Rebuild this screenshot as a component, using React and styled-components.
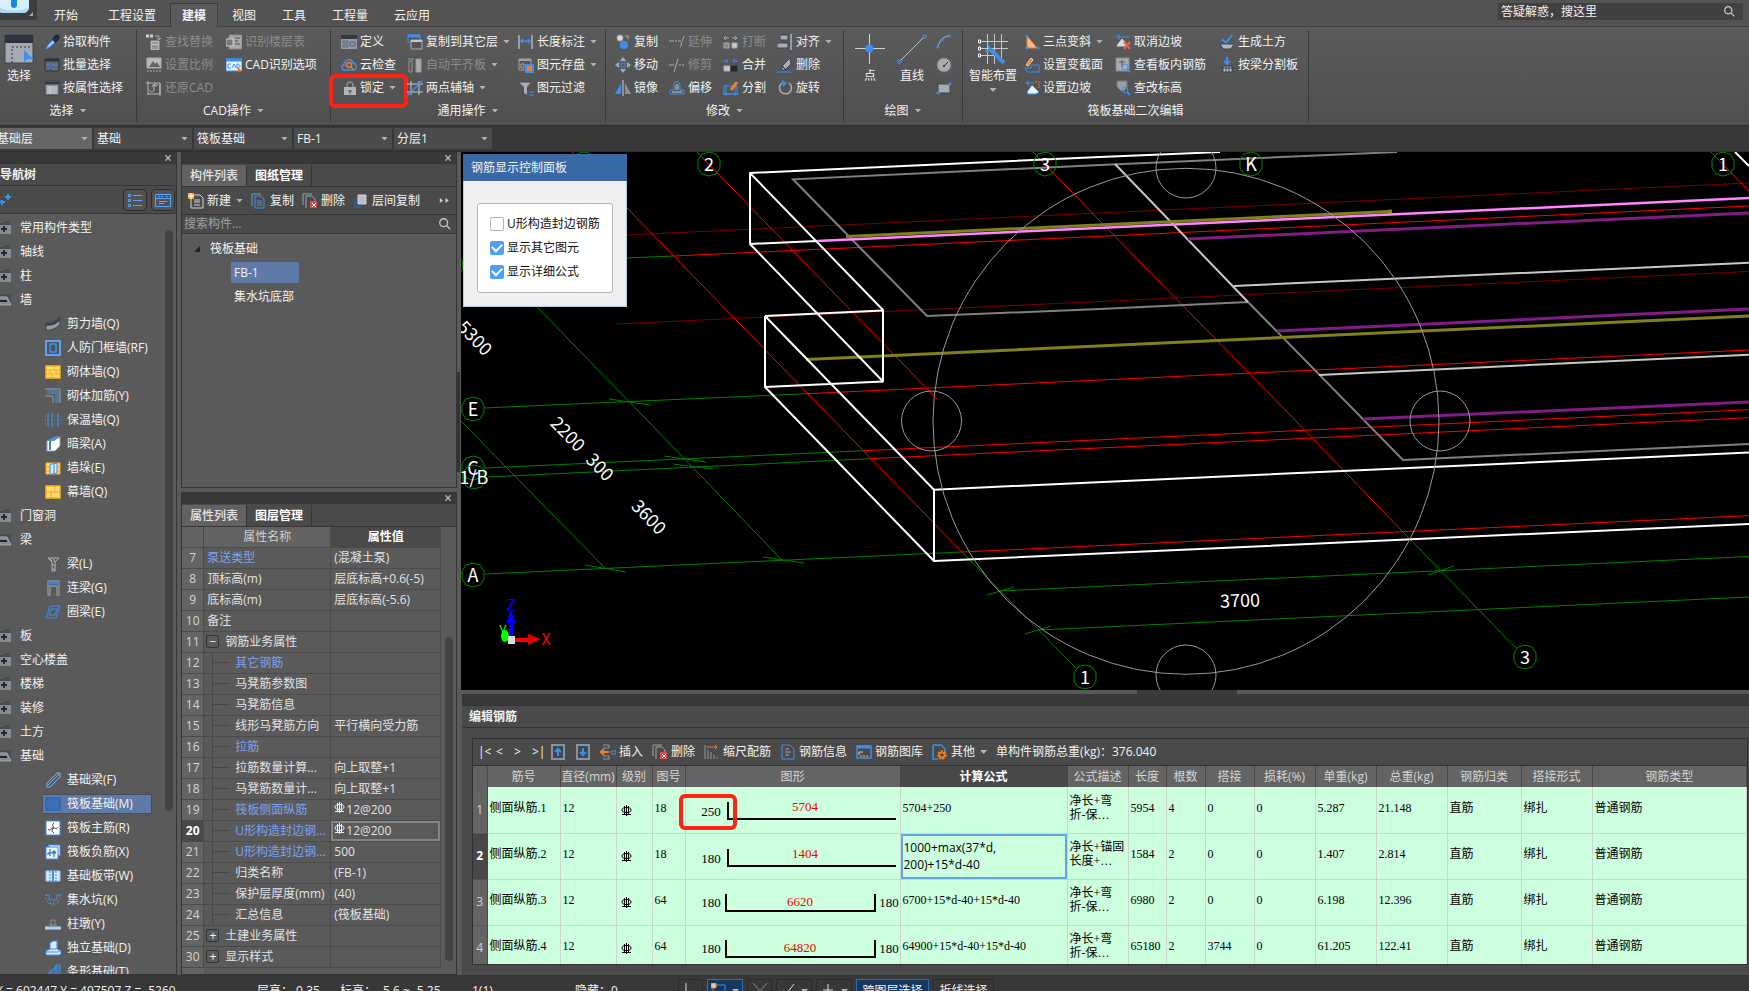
import styled, { createGlobalStyle, css } from 'styled-components';

const GlobalStyle = createGlobalStyle`
  :root {
    --bar: #383838;
    --line: #353535;
    --title: #4a4a4a;
    --panel: #5a5a5a;
    --head: #626262;
    --select: #607aa8;
    --blue: #3d8fee;
    --mark: #ff2314;
    --cell: #ccffdd;
  }

  * {
    box-sizing: border-box;
  }

  body {
    margin: 0;
    overflow: hidden;
    background: var(--bar);
  }

  body,
  button,
  input,
  select {
    font-family: 'Open Sans', 'Noto Sans CJK SC', sans-serif;
    font-size: 12px;
    line-height: 16px;
    color: #f2f2f2;
  }

  button {
    padding: 0;
    border: 0;
    background: none;
    white-space: nowrap;
  }

  svg {
    display: block;
    flex: none;
  }
`;

/* ---------- icons ---------- */

const G = '#a7abb3';
const D = '#3c424c';
const B = '#3d8fee';
const O = '#f07d28';

const Svg = ({ size = 16, box = 16, children }) => (
  <svg width={size} height={size} viewBox={`0 0 ${box} ${box}`} fill='none' stroke={G} aria-hidden='true'>
    {children}
  </svg>
);

const icons = {
  pick: (
    <>
      <path d='M2 15l2-4 5-5 2 2-5 5z' stroke={B} fill='#9ec8f5' />
      <path d='M8 5l4 4M9 4l3-3 3 1v3l-3 3z' stroke='#25282e' fill='#25282e' />
    </>
  ),
  batch: (
    <>
      <path d='M1 2h14v12H1z' fill='#5f6670' stroke='#2d3540' />
      <path d='M1 3h14' stroke='#2d3540' strokeWidth='3' />
      <path d='M3 7l1 1 2-2M3 11l1 1 2-2M8 8h5M8 12h5' stroke={B} />
    </>
  ),
  byProp: (
    <>
      <path d='M1 1h14v14H1z' fill='#8f949c' stroke={D} />
      <path d='M1 3h14' stroke='#333842' strokeWidth='3' />
      <path d='M3 7h10M3 9h10M3 11h10M3 13h10M6 6v8' stroke='#d5d8dd' />
    </>
  ),
  replace: (
    <>
      <path d='M0 2h3M4 2h3' stroke='#d0d0d0' strokeWidth='3' />
      <path d='M9 2h4v4M11 4l2 2 2-2' />
      <path d='M5 7h8v9H5z' fill='#c4c4c4' />
      <path d='M6 9h6M6 12h6M6 14h6' stroke='#666' />
    </>
  ),
  ratio: (
    <>
      <path d='M1 1h14v10H1z' fill='#b8b8b8' />
      <path d='M3 10l4-6 2 3 2-2 3 5z' fill='#666' stroke='none' />
      <path d='M1 14h14' strokeDasharray='2 1' />
    </>
  ),
  restore: <path d='M2 1v14M0 3h14v11H2M14 3v13M4 10c0 3 4 2 4 0V5h4M6 7l2-3 2 3' stroke='#b8b8b8' />,
  floors: (
    <>
      <path d='M3 1h13v14H3z' fill='#aaa' stroke='#888' />
      <path d='M0 5h7v7H0z' fill='#777' stroke='#ccc' />
      <path d='M9 4h5M9 7h3M9 10h5' stroke='#555' />
    </>
  ),
  cad: (
    <>
      <path d='M0 2h16v12H0z' fill='#e8f2ff' stroke={B} />
      <path d='M0 3h16' stroke={B} strokeWidth='3' />
      <path d='M5 7H2v4h3M6 11l2-4 2 4M11 7v4c4 0 4-4 0-4' stroke={B} />
      <path d='M11 9l5 5h-3l-1 2z' fill={O} stroke='none' />
    </>
  ),
  define: (
    <>
      <path d='M0 1h16v14H0z' fill='#9398a1' stroke='none' />
      <path d='M0 3h16' stroke='#333842' strokeWidth='4' />
      <path d='M2 7h5v2H2zM2 11h5v2H2zM9 8h5v4H9z' stroke='#596880' />
    </>
  ),
  cloud: (
    <>
      <path d='M4 13C0 13 0 8 3 8c0-6 8-7 9-2 4 0 4 7 1 7z' stroke={B} strokeWidth='1.5' />
      <circle cx='8' cy='8' r='2.5' stroke={O} strokeWidth='1.5' />
      <path d='M10 10l3 3' stroke={O} strokeWidth='1.5' />
    </>
  ),
  lock: (
    <>
      <path d='M6 8V5c0-4 6-4 6 0v3' stroke='#8d8f94' strokeWidth='1.5' />
      <path d='M3 7h12v8H3z' fill='#b3b4ba' stroke='none' />
      <path d='M9 10v4M7 11h4' stroke='#555' />
    </>
  ),
  copyFloor: (
    <>
      <path d='M1 1h12v7H1z' fill='#555' stroke={B} />
      <path d='M1 2h12' stroke={B} strokeWidth='3' />
      <path d='M4 6h11v9H4z' fill='#555' />
      <path d='M4 7h11' stroke='#c5c8cc' strokeWidth='2' />
    </>
  ),
  level: (
    <>
      <path d='M1 2h6M2 4h3v11H2z' stroke='#999' />
      <path d='M9 2h5v13H9z' fill='#aaa' stroke='#999' />
    </>
  ),
  twoPoint: (
    <>
      <path d='M4 1v14M12 1v14M0 4h16M0 12h16' stroke='#c5c8cc' />
      <path d='M1 15L15 1' stroke={B} strokeWidth='1.5' />
    </>
  ),
  length: (
    <>
      <path d='M1 1v14M14 1v14' stroke='#dde' />
      <path d='M3 7h9M5 5L3 7l2 2M10 5l2 2-2 2' stroke={B} strokeWidth='1.5' />
    </>
  ),
  saveUnit: (
    <>
      <path d='M1 2h12v11H1z' stroke='#9ba3ae' fill='#555' />
      <path d='M1 3h12' stroke='#9ba3ae' strokeWidth='2' />
      <path d='M3 7h3v4H3z' />
      <path d='M8 8h7v7H8z' fill={O} stroke={B} strokeWidth='2' />
    </>
  ),
  filter: (
    <>
      <path d='M1 2h12L9 7v8l-3-2V7z' fill={G} stroke='none' />
      <path d='M1 2h12' stroke={D} />
      <path d='M11 12h5M11 15h5' stroke={B} />
    </>
  ),
  copyObj: (
    <>
      <circle cx='5' cy='4' r='3' fill='#d6d8dc' />
      <circle cx='9' cy='11' r='4' fill={B} stroke='none' />
      <path d='M10 2h3v3' />
    </>
  ),
  move: (
    <>
      <path d='M8 0l3 4H5zM8 16l3-4H5zM0 8l4-3v6zM16 8l-4-3v6z' fill={G} stroke='none' />
      <path d='M6 6h4v4H6z' stroke={B} />
    </>
  ),
  mirror: (
    <>
      <path d='M6 3v11H0z' fill={B} stroke='none' />
      <path d='M10 3v11h6z' fill='#8d929a' stroke='none' />
      <path d='M8 0v16' stroke='#ccc' />
    </>
  ),
  extend: <path d='M0 7h8M9 7h3M15 2l-4 12' strokeDasharray='5 1' />,
  trim: <path d='M0 8h5M10 8h2M13 8h2M9 2L5 15' />,
  offset: (
    <>
      <path d='M1 14h14v-4h-4V6c0-6-7-6-6 0v4H1z' stroke={B} />
      <path d='M3 12h10M7 10V6c0-2 2-2 2 0v4' stroke='#c5c8cc' />
    </>
  ),
  breakObj: (
    <>
      <path d='M1 9h5v5H1z' fill='#888' />
      <path d='M9 9h5v5H9z' fill='#c9c9c9' />
      <path d='M1 4h5M3 2L1 4l2 2M9 4h5M12 2l2 2-2 2' />
    </>
  ),
  merge: (
    <>
      <path d='M1 9h6v5H1z' fill='#c3c6cb' />
      <path d='M8 9h6v5H8z' fill='#222831' stroke='#222831' />
      <path d='M0 4h5M3 2l2 2-2 2M15 4h-5M12 2l-2 2 2 2' stroke={B} />
    </>
  ),
  split: (
    <>
      <path d='M1 6h13v8H1zM0 14h16M3 4v12M12 4v12' stroke={B} />
      <path d='M8 10l6-8' stroke={O} strokeWidth='3' />
    </>
  ),
  align: (
    <>
      <path d='M3 1h8v5H3zM0 9h11v5H0z' fill={G} stroke={D} />
      <path d='M14 0v16' stroke='#ddd' />
    </>
  ),
  erase: (
    <>
      <path d='M4 13l2-5 7-7 1 6-6 6z' fill={G} stroke={D} />
      <path d='M5 9l4 4' stroke='#222' />
      <path d='M0 15h14' stroke={B} />
    </>
  ),
  rotate: (
    <>
      <path d='M5 3a6 6 0 1 0 7 0' stroke='#a8acb4' strokeWidth='1.5' />
      <path d='M5 0l5 3-4 4z' fill={B} stroke='none' />
    </>
  ),
  arc: (
    <>
      <path d='M2 13C3 7 6 3 13 2' stroke='#b8bbc2' />
      <path d='M1 12h2v2H1zM5 5h2v2H5zM12 1h2v2h-2z' stroke={B} />
    </>
  ),
  circle: (
    <>
      <circle cx='8' cy='8' r='7' fill={G} stroke='#777b84' />
      <path d='M8 9l4-4' stroke='#222' />
      <path d='M7 8h2v2H7z' fill='#444' stroke='none' />
    </>
  ),
  rect: (
    <>
      <path d='M2 4h12v9H2z' fill={G} stroke={D} />
      <path d='M1 12h2v2H1zM13 3h2v2h-2z' stroke={B} />
    </>
  ),
  threePoint: (
    <>
      <path d='M3 2v12h10z' fill='#f6b98d' stroke={O} />
      <path d='M2 1h2v2H2zM2 13h2v2H2zM13 13h2v2h-2z' stroke={B} />
    </>
  ),
  section: (
    <>
      <path d='M1 11h6V8h8v7H3z' stroke={B} />
      <path d='M2 8l5-7 2 2-5 6z' fill={O} stroke='#ffd2ad' />
    </>
  ),
  slope: (
    <>
      <path d='M1 3h9M4 0v6' stroke={B} />
      <path d='M3 12l5-7 7 7-3 2H4z' fill='#e8f2ff' stroke={B} />
      <path d='M11 2h4v6' stroke={O} strokeDasharray='2 1' />
    </>
  ),
  cancelSlope: (
    <>
      <path d='M1 3h13M4 0v6' stroke={B} />
      <path d='M2 12l5-7 6 7z' fill='#d8dbe0' stroke='#d8dbe0' />
      <path d='M9 8l6 7M15 8l-6 7' stroke='#e8604c' strokeWidth='2' />
    </>
  ),
  viewBar: (
    <>
      <path d='M1 1h13v13H1z' fill={G} stroke='#858a92' />
      <path d='M7 3v7M4 5h6' stroke='#555' />
      <circle cx='10' cy='10' r='3' stroke={B} />
      <path d='M12 12l3 3' stroke={B} strokeWidth='2' />
    </>
  ),
  checkLevel: (
    <>
      <path d='M2 1h10v6l-3 4H6L2 7z' fill='#999da6' stroke='#777' />
      <circle cx='10' cy='10' r='3' stroke={B} />
      <path d='M12 12l3 3' stroke={B} strokeWidth='2' />
    </>
  ),
  earth: (
    <>
      <path d='M3 5l4 4 6-8' stroke={B} strokeWidth='2' />
      <path d='M1 10h14l-3 5H4z' fill='#b4b7bd' stroke={D} />
    </>
  ),
  beamSplit: (
    <>
      <path d='M4 9h9v6H4z' fill='#bfc2c8' stroke={D} />
      <path d='M1 11h14M7 9v7M10 9v7' stroke={D} />
      <path d='M8 0v7M5 4l3 3 3-3' stroke={B} strokeWidth='2' />
    </>
  ),
  newDoc: (
    <>
      <path d='M3 2h9l3 3v10H3z' stroke='#cfd2d6' />
      <path d='M6 7h6M6 9h6M6 12h6' stroke='#cfd2d6' />
      <path d='M0 0h6v6H0z' fill='#f8a73a' stroke='none' />
      <path d='M3 0v6M0 3h6' stroke='#fff' />
    </>
  ),
  copyDoc: (
    <>
      <path d='M1 13V1h9' stroke='#7f9ab5' />
      <path d='M4 3h6l3 3v9H4z' stroke={B} />
      <path d='M6 8h5M6 10h5M6 12h5' stroke={B} />
    </>
  ),
  delDoc: (
    <>
      <path d='M1 12V1h9M4 15V3h6l3 3v2' stroke='#9ba5af' />
      <path d='M8 8h7v7H8z' fill='#e04a4a' stroke='none' />
      <path d='M10 10l4 4M14 10l-4 4' stroke='#fff' />
    </>
  ),
  layerCopy: (
    <>
      <path d='M2 5v9h8' stroke='#285c94' strokeWidth='2' />
      <path d='M5 2h8v9H5z' fill='#b8bdc8' stroke='#d0d4dd' />
    </>
  ),
  folder: (
    <>
      <path d='M1 3h8l2-2h4v13H1z' fill='#474c54' stroke='none' />
      <path d='M1 5h15v9H1z' fill='#868b94' stroke='none' />
      <path d='M6 9h6M9 6v6' stroke='#25282d' strokeWidth='2' />
    </>
  ),
  folderOpen: (
    <>
      <path d='M1 2h15v12H1z' fill='#474c54' stroke='none' />
      <path d='M1 5h11l4 8H1z' fill='#868b94' stroke='#aaa' />
      <path d='M5 9h7' stroke='#25282d' strokeWidth='2' />
    </>
  ),
  wall: (
    <>
      <path d='M1 6c6 1 9-1 14-5v7C12 12 6 15 1 14z' fill='#989da6' stroke={D} />
      <path d='M1 8c6 1 9-1 14-5' stroke={D} strokeWidth='3' />
    </>
  ),
  frame: (
    <>
      <path d='M1 1h14v14H1z' fill='#4e545e' stroke='#64a1e6' strokeWidth='2' />
      <path d='M5 4h6v8H5z' stroke={B} strokeWidth='1.5' />
    </>
  ),
  brick: (
    <>
      <path d='M1 2h14v12H1z' fill='#ffda7e' stroke='#ffb20f' strokeWidth='1.5' />
      <path d='M1 6h14M1 10h14M9 2v4M5 6v4M11 6v4M7 10v4' stroke='#ffab00' />
    </>
  ),
  curtain: (
    <>
      <path d='M1 2h14v12H1z' fill='#ffda7e' stroke='#ffb20f' strokeWidth='1.5' />
      <path d='M1 8h14M10 2v6M6 8v6' stroke='#ffab00' />
    </>
  ),
  brickBar: (
    <>
      <path d='M0 1h15v14M0 8h8v7' stroke='#8fa3ae' />
      <path d='M2 3h11v12M2 5h9v10' stroke='#4a93e0' />
    </>
  ),
  insulate: (
    <>
      <path d='M3 1v14M7 1v14M13 1v14' stroke='#4a93e0' />
      <path d='M0 4h16M0 8h16M0 12h16' stroke='#4a93e0' strokeDasharray='1 2' />
    </>
  ),
  hiddenBeam: (
    <>
      <path d='M2 5l9-4h4v9l-5 5H2z' fill='#fff' stroke='#89a0b5' />
      <path d='M2 5l9-4h4L9 5z' fill={B} stroke='none' />
      <path d='M5 5v9' stroke='#3e83ca' strokeWidth='2' />
    </>
  ),
  pier: (
    <>
      <path d='M1 3h14v11H1z' fill='#ffda7e' stroke='#ffb20f' />
      <path d='M1 7h14M1 11h14' stroke='#ffab00' />
      <path d='M5 5l4-2v10l-4 2zM9 4l3-1v10l-3 1' fill='#d6e9ff' stroke={B} />
    </>
  ),
  beam: <path d='M3 2h11l-4 4v9H7V6zM5 3l2 2M8 3l2 3M7 8l3 2M7 12l3 2' stroke='#b4b6b9' />,
  linkBeam: (
    <>
      <path d='M3 15V1h11v14h-2V6H5v9z' stroke='#899096' strokeWidth='1.5' />
      <path d='M3 3h11' stroke='#3e83ca' strokeWidth='3' />
    </>
  ),
  ringBeam: <path d='M1 14L5 2h10l-4 12zM4 11l2-6h6l-2 6z' stroke={B} />,
  baseBeam: <path d='M2 11L12 1h3v4L5 15H2zM3 13l9-9 2-2' stroke='#7bb2ee' />,
  raft: (
    <>
      <path d='M1 2h14v12H1z' fill='#436fa8' stroke='#2767bd' strokeWidth='1.5' />
      <path d='M4 5h8v6H4zM1 8h14M8 2v12' stroke='#2f75d0' strokeDasharray='2 1' />
    </>
  ),
  raftMain: (
    <>
      <path d='M1 1h14v14H1z' fill='#fff' stroke={B} />
      <path d='M3 9c2 3 2-1 5-1s3 2 5-1M9 3c-3 2 0 3-1 5s-2 3 1 5' stroke='#333' />
    </>
  ),
  raftNeg: (
    <>
      <path d='M3 1h12v11M1 3h12v12H1z' fill='#ecf5ff' stroke={B} />
      <path d='M3 11V9h8M5 5v7M9 6v7M7 8h4' stroke='#1e61a8' />
    </>
  ),
  strip: (
    <>
      <path d='M1 3h14v10H1z' fill='#d8e9fb' stroke='#9dc9f3' />
      <path d='M5 3v10M11 3v10' stroke={B} strokeDasharray='2 1' />
      <path d='M8 3v10' stroke={B} strokeWidth='2' />
    </>
  ),
  pit: (
    <>
      <path d='M1 3v4l4 6h6l4-6V3' stroke='#9aa6b2' strokeDasharray='1 2' />
      <path d='M0 3h4v5h8V3h4' stroke={B} />
      <path d='M5 11h6' strokeDasharray='1 2' />
    </>
  ),
  cap: (
    <>
      <path d='M6 10V4h4v6M4 9h8' stroke='#888d92' />
      <path d='M0 12h16' stroke='#a9d4ff' strokeWidth='3' />
    </>
  ),
  iso: (
    <>
      <path d='M1 11l4-2V3l3-2h4v8l4 2v3l-2 1H1z' fill='#dcecfd' stroke={B} />
      <path d='M1 12h12l3-2M5 9h6l2-2' stroke={B} />
    </>
  ),
  stripBase: <path d='M1 15l4-8 4-2 2-4h4v12l-4 2zM5 7l4 8M11 1v14' stroke={B} fill='#4b6f9b' />,
  insert: (
    <>
      <path d='M3 1h6v3H3M3 12h6v3H3' stroke='#8b9aa5' />
      <path d='M11 7h5v3h-5z' stroke={B} />
      <path d='M9 8H1M4 5L1 8l3 3' stroke={O} strokeWidth='2' />
    </>
  ),
  scale: (
    <>
      <path d='M1 1v14M4 6v9M7 8v7M10 11v4M13 13v2' stroke='#8b9aa5' />
      <path d='M3 3h10M11 1l2 2-2 2' stroke={O} />
    </>
  ),
  info: (
    <>
      <path d='M2 1h8l4 4v10H2z' stroke={B} />
      <path d='M5 5h4M5 8h6M5 11h4' stroke='#9ab' />
    </>
  ),
  library: (
    <>
      <path d='M1 2h14v12H1z' stroke={B} strokeWidth='1.5' />
      <path d='M1 3h14' stroke={B} strokeWidth='3' />
      <path d='M3 11V8h4' stroke='#ccc' />
      <path d='M4 12h9' stroke='#ffc83d' strokeDasharray='2 1' />
    </>
  ),
  other: (
    <>
      <path d='M1 1h8l4 4v3M1 1v14h5' stroke={B} strokeWidth='1.5' />
      <circle cx='10' cy='11' r='3.5' stroke={O} strokeWidth='2.5' strokeDasharray='2 1' />
      <circle cx='10' cy='11' r='2.5' stroke={O} strokeWidth='1.5' />
    </>
  ),
  up: (
    <>
      <path d='M2 1h12v14H2z' fill='#3f464d' stroke='#85939e' strokeWidth='2' />
      <path d='M8 12V5M5 8l3-3 3 3' stroke={B} strokeWidth='2' />
    </>
  ),
  down: (
    <>
      <path d='M2 1h12v14H2z' fill='#3f464d' stroke='#85939e' strokeWidth='2' />
      <path d='M8 4v7M5 8l3 3 3-3' stroke={B} strokeWidth='2' />
    </>
  ),
  plus: <path d='M5 5h6M8 2v6M0 10h5M2 8v5' stroke={B} strokeWidth='2' />,
  list: <path d='M1.5 2.5h2v2h-2zM1.5 7.5h2v2h-2zM1.5 12.5h2v2h-2zM6 3.5h9M6 8.5h9M6 13.5h9' stroke='#55a5ff' />,
  card: <path d='M.5 2.5h15v12H.5zM.5 6.500h15M3 4.500h2M6 4.500h2M11 4.500h2M4 9.500h8M4 11.500h5' stroke='#55a5ff' />,
  search: <path d='M6.5 2a4.5 4.5 0 1 0 0 9a4.5 4.5 0 1 0 0-9M10 10l4 4' stroke='#c8c8c8' strokeWidth='1.5' />,
  more: <path d='M1 5l4 3-4 3zM8 5l4 3-4 3z' fill='#ccc' stroke='none' />,
  close: <path d='M5 5l6 6M11 5l-6 6' stroke='#c8c8c8' strokeWidth='1.5' />,
};

const Icon = ({ name, size }) => <Svg size={size}>{icons[name]}</Svg>;

const SelectIcon = () => (
  <Svg size={30} box={30}>
    <path d='M1 1h28v28H1z' fill='#a5a9b1' stroke='#3c424c' />
    <path d='M1 5h28' stroke='#2d333e' strokeWidth='8' />
    <path d='M8 29V13h20' stroke='#333' strokeDasharray='2 2' />
    <path d='M20 16l9 9h-5l-4 3z' fill={B} stroke='none' />
  </Svg>
);

const PointIcon = () => (
  <Svg size={30} box={30}>
    <path d='M14.5 0v30M0 14.5h30' stroke='#d0d3d8' />
    <circle cx='14.5' cy='14.5' r='4' fill={B} stroke='none' />
  </Svg>
);

const LineIcon = () => (
  <Svg size={30} box={30}>
    <path d='M3 27L27 3' stroke='#c0c3c8' />
    <path d='M1 26h3v3H1zM26 1h3v3h-3z' stroke={B} />
  </Svg>
);

const SmartIcon = () => (
  <Svg size={30} box={30}>
    <path d='M9.5 0v30M16.5 0v30M23.5 0v24M2 7.5h28M2 14.5h28M2 21.5h14' stroke='#c5c8ce' />
    <path d='M.5 6h2v3h-2zM.5 13h2v3h-2zM.5 20h2v3h-2z' stroke='#fff' />
    <path d='M12 15l14 14' stroke={B} strokeWidth='4' />
    <path d='M10 11l3 5M7 17h6' stroke={B} strokeWidth='2' />
  </Svg>
);

const RebarMark = ({ color = '#eee' }) => (
  <svg width='11' height='12' viewBox='0 0 11 12' fill='none' stroke={color} role='img' aria-label='HRB400'>
    <ellipse cx='5.5' cy='5' rx='4.5' ry='2.5' />
    <path d='M3.5 1v8M5.5 0v11M7.5 1v8M1 9.5h9' />
  </svg>
);

/* ---------- shared parts ---------- */

const Caret = styled.span`
  flex: none;
  width: 7px;
  height: 4px;
  background: #b4b4b4;
  clip-path: polygon(0 0, 100% 0, 50% 100%);
`;

const Shell = styled.div`
  display: flex;
  flex-direction: column;
  height: 100vh;
  overflow: hidden;
`;

/* ---------- top tabs ---------- */

const TabBar = styled.header`
  display: flex;
  align-items: flex-start;
  flex: none;
  height: 27px;
  background: #535353;
  border-bottom: 1px solid #404040;
`;

const Logo = styled.div`
  flex: none;
  width: 37px;
  height: 20px;
  margin-right: 5px;
  background: #3d3d3d;
`;

const TabList = styled.nav`
  display: flex;
  gap: 2px;
  padding-top: 3px;
`;

const MenuTab = styled.button`
  height: 24px;
  padding: 0 12px;
  border: solid transparent;
  border-width: 1px 0 0;

  &:first-child {
    margin-right: 4px;
  }

  ${props =>
    props.$active &&
    css`
      padding: 0 11px;
      border-color: #3d3d3d;
      border-width: 1px 1px 0;
      background: #5a5a5a;
      font-weight: 700;
    `}
`;

const HelpSearch = styled.label`
  display: flex;
  align-items: center;
  width: 245px;
  height: 17px;
  margin: 3px 6px 0 auto;
  padding: 0 7px 0 3px;
  background: #414141;
`;

const SearchInput = styled.input`
  flex: 1;
  min-width: 0;
  padding: 0;
  border: 0;
  outline: 0;
  background: none;

  &::placeholder {
    color: ${props => props.$hint || '#f2f2f2'};
    opacity: 1;
  }
`;

/* ---------- ribbon ---------- */

const RibbonBar = styled.div`
  display: flex;
  flex: none;
  height: 99px;
  padding-top: 3px;
  background: linear-gradient(#5b5b5b, #4f4f4f);
  border-bottom: 1px solid #2f2f2f;
`;

const Group = styled.section`
  display: flex;
  flex-direction: column;
  flex: none;
  width: ${props => props.$width}px;
  height: 92px;
  padding-left: ${props => props.$pad}px;
  border-right: 1px solid #393939;
`;

const GroupTools = styled.div`
  display: flex;
  height: 69px;
`;

const GroupCaption = styled.div`
  display: flex;
  align-items: center;
  justify-content: center;
  gap: 6px;
  height: 26px;
  margin-left: ${props => -props.$pad}px;
`;

const ToolColumn = styled.div`
  display: flex;
  flex-direction: column;
  flex: none;
  width: ${props => props.$width}px;
`;

const ToolButton = styled.button`
  position: relative;
  display: flex;
  align-items: center;
  gap: 3px;
  height: 23px;
  color: ${props => (props.$off ? '#8c8c8c' : '#f2f2f2')};

  & > ${Caret} {
    margin-left: 2px;
  }
`;

const BigTool = styled.button`
  display: flex;
  flex-direction: column;
  align-items: center;
  gap: 4px;
  flex: none;
  width: ${props => props.$width}px;
  margin-right: 6px;
  padding-top: 4px;
`;

const RedMark = styled.span`
  position: absolute;
  inset: ${props => props.$inset};
  border: 4px solid var(--mark);
  border-radius: 6px;
  pointer-events: none;
`;

function Tool({ icon, label, off, menu, marked }) {
  return (
    <ToolButton $off={off} disabled={off}>
      <Icon name={icon} />
      {label}
      {menu && <Caret />}
      {marked && <RedMark $inset='-2px -1px -9px -12px' />}
    </ToolButton>
  );
}

const ribbon = [
  {
    caption: '选择',
    menu: true,
    width: 137,
    pad: 0,
    big: [{ label: '选择', width: 38, art: <SelectIcon /> }],
    columns: [
      { width: 86, tools: [['pick', '拾取构件'], ['batch', '批量选择'], ['byProp', '按属性选择']] },
    ],
  },
  {
    caption: 'CAD操作',
    menu: true,
    width: 194,
    pad: 9,
    columns: [
      { width: 80, tools: [['replace', '查找替换', 'off'], ['ratio', '设置比例', 'off'], ['restore', '还原CAD', 'off']] },
      { width: 100, tools: [['floors', '识别楼层表', 'off'], ['cad', 'CAD识别选项']] },
    ],
  },
  {
    caption: '通用操作',
    menu: true,
    width: 275,
    pad: 10,
    columns: [
      { width: 66, tools: [['define', '定义'], ['cloud', '云检查'], ['lock', '锁定', 'menu marked']] },
      { width: 111, tools: [['copyFloor', '复制到其它层', 'menu'], ['level', '自动平齐板', 'off menu'], ['twoPoint', '两点辅轴', 'menu']] },
      { width: 80, tools: [['length', '长度标注', 'menu'], ['saveUnit', '图元存盘', 'menu'], ['filter', '图元过滤']] },
    ],
  },
  {
    caption: '修改',
    menu: true,
    width: 238,
    pad: 9,
    columns: [
      { width: 54, tools: [['copyObj', '复制'], ['move', '移动'], ['mirror', '镜像']] },
      { width: 54, tools: [['extend', '延伸', 'off'], ['trim', '修剪', 'off'], ['offset', '偏移']] },
      { width: 54, tools: [['breakObj', '打断', 'off'], ['merge', '合并'], ['split', '分割']] },
      { width: 58, tools: [['align', '对齐', 'menu'], ['erase', '删除'], ['rotate', '旋转']] },
    ],
  },
  {
    caption: '绘图',
    menu: true,
    width: 119,
    pad: 8,
    big: [
      { label: '点', width: 36, art: <PointIcon /> },
      { label: '直线', width: 36, art: <LineIcon /> },
    ],
    columns: [{ width: 20, tools: [['arc', ''], ['circle', ''], ['rect', '']] }],
  },
  {
    caption: '筏板基础二次编辑',
    width: 346,
    pad: 5,
    big: [{ label: '智能布置', width: 50, art: <SmartIcon />, menu: true }],
    columns: [
      { width: 91, tools: [['threePoint', '三点变斜', 'menu'], ['section', '设置变截面'], ['slope', '设置边坡']] },
      { width: 104, tools: [['cancelSlope', '取消边坡'], ['viewBar', '查看板内钢筋'], ['checkLevel', '查改标高']] },
      { width: 85, tools: [['earth', '生成土方'], ['beamSplit', '按梁分割板']] },
    ],
  },
];

function Ribbon() {
  return (
    <RibbonBar>
      {ribbon.map(group => (
        <Group key={group.caption} $width={group.width} $pad={group.pad}>
          <GroupTools>
            {group.big?.map(tool => (
              <BigTool key={tool.label} $width={tool.width}>
                {tool.art}
                {tool.label}
                {tool.menu && <Caret />}
              </BigTool>
            ))}
            {group.columns.map(column => (
              <ToolColumn key={column.tools[0][0]} $width={column.width}>
                {column.tools.map(([icon, label, flags = '']) => (
                  <Tool
                    key={icon}
                    icon={icon}
                    label={label}
                    off={flags.includes('off')}
                    menu={flags.includes('menu')}
                    marked={flags.includes('marked')}
                  />
                ))}
              </ToolColumn>
            ))}
          </GroupTools>
          <GroupCaption $pad={group.pad}>
            {group.caption}
            {group.menu && <Caret />}
          </GroupCaption>
        </Group>
      ))}
    </RibbonBar>
  );
}

/* ---------- combo bar ---------- */

const ComboBar = styled.div`
  display: flex;
  gap: 2px;
  flex: none;
  height: 26px;
  padding: 2px 0;
  background: var(--bar);
  border-bottom: 1px solid #2c2c2c;
`;

const ComboBox = styled.div`
  display: flex;
  align-items: center;
  width: ${props => (props.$first ? 92 : 98)}px;
  height: 21px;
  padding-right: 4px;
  background: ${props => (props.$first ? '#666' : '#4b4b4b')};
  overflow: hidden;

  select {
    flex: 1;
    height: 21px;
    margin-left: ${props => (props.$first ? -3 : 3)}px;
    padding: 0;
    border: 0;
    appearance: none;
    background: none;
  }
`;

/* ---------- docked panels ---------- */

const Workspace = styled.main`
  display: flex;
  flex: 1;
  gap: 4px;
  min-height: 0;
  background: var(--panel);
`;

const Dock = styled.section`
  display: flex;
  flex-direction: column;
  flex: ${props => props.$flex || 1};
  min-height: 0;
  border: 1px solid var(--line);
  border-width: 0 1px 1px ${props => (props.$edge ? 0 : 1)}px;
  background: var(--panel);
  overflow: hidden;
`;

const CloseBar = styled.div`
  display: flex;
  align-items: center;
  justify-content: flex-end;
  flex: none;
  height: 12px;
  padding-right: 1px;
  background: var(--bar);
`;

const CloseStrip = () => (
  <CloseBar>
    <button aria-label='关闭'>
      <Icon name='close' size={14} />
    </button>
  </CloseBar>
);

const NavColumn = styled.aside`
  display: flex;
  flex: none;
  width: 177px;
`;

const DockTitle = styled.h2`
  flex: none;
  height: 22px;
  margin: 0;
  background: var(--title);
  border-bottom: 1px solid var(--line);
  font-size: 12px;
  line-height: 21px;
`;

const NavTools = styled.div`
  display: flex;
  align-items: center;
  gap: 4px;
  flex: none;
  height: 28px;
  padding-right: 1px;
  background: var(--title);
  border-bottom: 1px solid var(--line);
`;

const ViewButton = styled.button`
  display: grid;
  place-items: center;
  width: 24px;
  height: 22px;
  border: 1px solid #2c2c2c;
  border-radius: 4px;
  background: #525252;

  &:first-of-type {
    margin-left: auto;
  }
`;

const NavBody = styled.div`
  display: flex;
  flex: 1;
  min-height: 0;
  overflow: hidden;
`;

const NavList = styled.ul`
  flex: 1;
  margin: 0;
  padding: 3px 0 0;
  list-style: none;
`;

const NavItem = styled.li`
  display: flex;
  align-items: center;
  gap: 6px;
  height: 20px;
  margin: 1px 13px 4px ${props => (props.$depth ? 42 : -5)}px;
  padding-left: ${props => (props.$depth ? 3 : 0)}px;
  white-space: nowrap;

  & + & {
    margin-top: 4px;
  }

  & > svg {
    margin-right: ${props => (props.$depth ? 0 : 3)}px;
  }

  ${props =>
    props.$selected &&
    css`
      background: var(--select);
      box-shadow: inset 0 0 0 1px #454b57;
    `}
`;

const NavScroll = styled.div`
  flex: none;
  width: 8px;
  height: 581px;
  margin: 16px 3px 0 0;
  border-radius: 4px;
  background: #444;
`;

const navTree = [
  ['folder', '常用构件类型'],
  ['folder', '轴线'],
  ['folder', '柱'],
  ['folderOpen', '墙'],
  ['wall', '剪力墙(Q)', 1],
  ['frame', '人防门框墙(RF)', 1],
  ['brick', '砌体墙(Q)', 1],
  ['brickBar', '砌体加筋(Y)', 1],
  ['insulate', '保温墙(Q)', 1],
  ['hiddenBeam', '暗梁(A)', 1],
  ['pier', '墙垛(E)', 1],
  ['curtain', '幕墙(Q)', 1],
  ['folder', '门窗洞'],
  ['folderOpen', '梁'],
  ['beam', '梁(L)', 1],
  ['linkBeam', '连梁(G)', 1],
  ['ringBeam', '圈梁(E)', 1],
  ['folder', '板'],
  ['folder', '空心楼盖'],
  ['folder', '楼梯'],
  ['folder', '装修'],
  ['folder', '土方'],
  ['folderOpen', '基础'],
  ['baseBeam', '基础梁(F)', 1],
  ['raft', '筏板基础(M)', 1],
  ['raftMain', '筏板主筋(R)', 1],
  ['raftNeg', '筏板负筋(X)', 1],
  ['strip', '基础板带(W)', 1],
  ['pit', '集水坑(K)', 1],
  ['cap', '柱墩(Y)', 1],
  ['iso', '独立基础(D)', 1],
  ['stripBase', '条形基础(T)', 1],
];

function Navigator() {
  return (
    <NavColumn>
      <Dock $edge>
        <CloseStrip />
        <DockTitle>导航树</DockTitle>
        <NavTools>
          <Icon name='plus' />
          <ViewButton aria-label='列表'>
            <Icon name='list' />
          </ViewButton>
          <ViewButton aria-label='卡片'>
            <Icon name='card' />
          </ViewButton>
        </NavTools>
        <NavBody>
          <NavList>
            {navTree.map(([icon, label, depth]) => (
              <NavItem key={label} $depth={depth} $selected={icon === 'raft'}>
                <Icon name={icon} />
                {label}
              </NavItem>
            ))}
          </NavList>
          <NavScroll />
        </NavBody>
      </Dock>
    </NavColumn>
  );
}

const MiddleColumn = styled.div`
  display: flex;
  flex-direction: column;
  gap: 4px;
  flex: none;
  width: 276px;
`;

const PanelTabs = styled.div`
  display: flex;
  flex: none;
  height: 23px;
  padding-top: 1px;
  background: var(--title);
  border-bottom: 1px solid var(--line);
`;

const PanelTab = styled.button`
  width: 65px;
  border-right: 1px solid var(--line);
  background: ${props => (props.$active ? '#626262' : 'transparent')};
  color: ${props => (props.$active ? '#e4e4e4' : '#fff')};
  font-weight: ${props => (props.$active ? 500 : 700)};
`;

const ListTools = styled.div`
  display: flex;
  align-items: center;
  gap: 8px;
  flex: none;
  height: 28px;
  padding: 0 4px 0 6px;
  background: var(--title);
  border-bottom: 1px solid var(--line);

  & > :last-child {
    margin-left: auto;
  }
`;

const ListSearch = styled.label`
  display: flex;
  align-items: center;
  flex: none;
  height: 19px;
  padding: 0 4px 0 2px;
  background: var(--title);
  border-bottom: 1px solid var(--line);
`;

const UnitTree = styled.ul`
  margin: 0;
  padding: 3px 0 0 12px;
  list-style: none;
`;

const UnitNode = styled.li`
  display: flex;
  align-items: center;
  gap: 10px;
  height: 20px;
  margin: 2px 0 3px;
`;

const UnitLeaf = styled.li`
  width: 68px;
  height: 21px;
  margin: 0 0 3px 37px;
  padding-left: 3px;
  line-height: 21px;
  background: ${props => (props.$selected ? 'var(--select)' : 'none')};
`;

function UnitPanel() {
  return (
    <Dock $flex='0 0 336px'>
      <CloseStrip />
      <PanelTabs>
        <PanelTab $active>构件列表</PanelTab>
        <PanelTab>图纸管理</PanelTab>
      </PanelTabs>
      <ListTools>
        <Tool icon='newDoc' label='新建' menu />
        <Tool icon='copyDoc' label='复制' />
        <Tool icon='delDoc' label='删除' />
        <Tool icon='layerCopy' label='层间复制' />
        <button aria-label='更多'>
          <Icon name='more' size={13} />
        </button>
      </ListTools>
      <ListSearch>
        <SearchInput $hint='#a0a0a0' placeholder='搜索构件...' aria-label='搜索构件' />
        <Icon name='search' size={14} />
      </ListSearch>
      <UnitTree>
        <UnitNode>
          <svg width='6' height='6' aria-hidden='true'>
            <path d='M6 0v6H0z' fill='#222' />
          </svg>
          筏板基础
        </UnitNode>
        <UnitLeaf $selected>FB-1</UnitLeaf>
        <UnitLeaf>集水坑底部</UnitLeaf>
      </UnitTree>
    </Dock>
  );
}

const PropBody = styled.div`
  display: flex;
  flex: 1;
  min-height: 0;
  background: linear-gradient(90deg, #646464 22px, var(--panel) 22px);
`;

const PropTable = styled.table`
  border-collapse: collapse;
  table-layout: fixed;
  color: #e2e2e2;

  th,
  td {
    height: 21px;
    padding: 0 3px;
    border: 1px solid #4b4b4b;
    border-width: 0 1px 1px 0;
    text-align: left;
    font-weight: 400;
    line-height: 18px;
    white-space: nowrap;
    overflow: hidden;
  }

  thead th {
    height: 20px;
    background: var(--head);
    color: #cfcfcf;
    text-align: center;
  }

  thead th:last-child {
    background: var(--title);
    color: #fff;
    font-weight: 700;
  }
`;

const RowNumber = styled.th`
  && {
    padding: 0;
    text-align: center;
    background: ${props => (props.$current ? '#484848' : '#646464')};
    font-weight: ${props => (props.$current ? 700 : 400)};
    color: ${props => (props.$current ? '#fff' : '#d6d6d6')};
  }
`;

const PropName = styled.div`
  display: flex;
  align-items: center;
  height: 20px;
  color: ${props => (props.$link ? '#7ba2f2' : 'inherit')};
`;

const Branch = styled.span`
  flex: none;
  width: 23px;
  height: 21px;
  margin-left: 5px;
  border-left: 1px solid #484848;
  background: linear-gradient(#484848, #484848) 0 10px / 17px 1px no-repeat;
`;

const Expander = styled.button`
  flex: none;
  width: 13px;
  height: 13px;
  margin: 0 6px 0 -1px;
  border: 1px solid #333;
  border-radius: 2px;
  line-height: 10px;
`;

const PropValue = styled.td`
  ${props =>
    props.$current &&
    css`
      box-shadow: inset 0 0 0 2px #858585;
    `}

  svg {
    display: inline-block;
    margin-right: 1px;
  }
`;

const PropScroll = styled.div`
  flex: none;
  width: 8px;
  height: 324px;
  margin: 110px 3px 0 4px;
  border-radius: 4px;
  background: #444;
`;

// [number, name, value, kind, link]
const properties = [
  [7, '泵送类型', '(混凝土泵)', '', true],
  [8, '顶标高(m)', '层底标高+0.6(-5)', ''],
  [9, '底标高(m)', '层底标高(-5.6)', ''],
  [10, '备注', '', ''],
  [11, '钢筋业务属性', '', '−'],
  [12, '其它钢筋', '', 'leaf', true],
  [13, '马凳筋参数图', '', 'leaf'],
  [14, '马凳筋信息', '', 'leaf'],
  [15, '线形马凳筋方向', '平行横向受力筋', 'leaf'],
  [16, '拉筋', '', 'leaf', true],
  [17, '拉筋数量计算...', '向上取整+1', 'leaf'],
  [18, '马凳筋数量计...', '向上取整+1', 'leaf'],
  [19, '筏板侧面纵筋', '12@200', 'leaf', true],
  [20, 'U形构造封边钢...', '12@200', 'leaf', true],
  [21, 'U形构造封边钢...', '500', 'leaf', true],
  [22, '归类名称', '(FB-1)', 'leaf'],
  [23, '保护层厚度(mm)', '(40)', 'leaf'],
  [24, '汇总信息', '(筏板基础)', 'leaf'],
  [25, '土建业务属性', '', '+'],
  [30, '显示样式', '', '+'],
];

function PropertyPanel() {
  return (
    <Dock>
      <CloseStrip />
      <PanelTabs>
        <PanelTab $active>属性列表</PanelTab>
        <PanelTab>图层管理</PanelTab>
      </PanelTabs>
      <PropBody>
        <div>
          <PropTable>
            <colgroup>
              <col width='22' />
              <col width='127' />
              <col width='110' />
            </colgroup>
            <thead>
              <tr>
                <th />
                <th>属性名称</th>
                <th>属性值</th>
              </tr>
            </thead>
            <tbody>
              {properties.map(([no, name, value, kind, link]) => (
                <tr key={no}>
                  <RowNumber $current={no === 20}>{no}</RowNumber>
                  <td>
                    <PropName $link={link}>
                      {kind === 'leaf' && <Branch />}
                      {kind && kind !== 'leaf' && <Expander aria-label={name}>{kind}</Expander>}
                      {name}
                    </PropName>
                  </td>
                  <PropValue $current={no === 20}>
                    {value.includes('@') && <RebarMark />}
                    {value}
                  </PropValue>
                </tr>
              ))}
            </tbody>
          </PropTable>
        </div>
        <PropScroll />
      </PropBody>
    </Dock>
  );
}

/* ---------- drawing ---------- */

const MainColumn = styled.div`
  position: relative;
  display: flex;
  flex-direction: column;
  flex: 1;
  min-width: 0;
`;

const Viewport = styled.div`
  position: relative;
  flex: 1;
  min-height: 0;
  background: #000;
  overflow: hidden;

  & > svg {
    width: 100%;
    height: 100%;
  }

  text {
    font-family: 'Noto Sans CJK SC', sans-serif;
    font-size: 18px;
    text-anchor: middle;
    dominant-baseline: central;
    fill: #fff;
    stroke: none;
  }
`;

const SideHandle = styled.div`
  position: absolute;
  left: -4px;
  top: 220px;
  width: 3px;
  height: 100px;
  background: #333;
`;

const FloatPanel = styled.section`
  position: absolute;
  left: 2px;
  top: 2px;
  width: 164px;
  background: #efefef;
  border: 1px solid #b9cbe0;

  h2 {
    margin: -1px -1px 0;
    padding: 0 8px;
    background: #3869a5;
    font-size: 12px;
    font-weight: 400;
    line-height: 27px;
  }
`;

const CheckGroup = styled.div`
  display: flex;
  flex-direction: column;
  gap: 8px;
  margin: 22px 13px 13px;
  padding: 12px 0 12px 12px;
  border: 1px solid #b2b2b2;
  border-radius: 3px;
  background: #fff;
`;

const CheckRow = styled.label`
  display: flex;
  align-items: center;
  gap: 3px;
  height: 16px;
  color: #111;
  white-space: nowrap;

  input {
    display: grid;
    place-items: center;
    width: 14px;
    height: 14px;
    margin: 0;
    border: 1px solid #b2b2b2;
    border-radius: 2px;
    appearance: none;
    background: #fff;
  }

  input:checked {
    border-color: #4f9ef8;
    background: #4f9ef8;
  }

  input:checked::after {
    content: '';
    width: 8px;
    height: 5px;
    margin-top: -3px;
    border: solid #fff;
    border-width: 0 0 2px 2px;
    transform: rotate(-45deg);
  }
`;

const bubbles = [
  [473, 409, 'E'],
  [473, 468, 'C'],
  [474, 477, '1/B'],
  [473, 575, 'A'],
  [709, 164, '2'],
  [1045, 164, '3'],
  [1251, 164, 'K'],
  [1723, 164, '1'],
  [1085, 677, '1'],
  [1525, 657, '3'],
];

const dims = [
  [476, 337, 46, '5300'],
  [569, 433, 46, '2200'],
  [601, 466, 46, '300'],
  [650, 516, 46, '3600'],
  [1240, 599, -2, '3700'],
];

const BUBBLE = 'M0-12l7 2 4 6v8l-4 6-7 2-7-2-4-6v-8l4-6z';

function Model() {
  return (
    <svg viewBox='461 152 1288 538' preserveAspectRatio='xMinYMin slice' fill='none' role='img' aria-label='筏板基础三维视图'>
      <g stroke='#008000'>
        <path d='M627 258L674 256M484 408L807 393.7M485 468L864 450.7M488 477L870 458.7M485 574L962 552' />
        <path d='M536 306L647 420L782 560M460 420L605 568M962 552L1076 668M1403 532L1516 648' />
        <path d='M609 399l41 6M664 456l42 6M673 464l40 5M585 565l41 7M763 557l41 6' />
        <path d='M987 595l27-8M1025 634l26-8M1428 575l26-9' />
        <path d='M999 591L1749 556.5M1039 630L1749 597' />
        <circle cx='451' cy='265' r='12' />
        <circle cx='584' cy='164' r='12' />
      </g>
      <g stroke='#7a0000'>
        <path d='M627 235L1100 213L1749 183M616 324L1100 301.5L1749 271.5' />
      </g>
      <g stroke='#ff0000'>
        <path d='M674 256L1100 236.3L1749 206M807 393.7L1100 380L1749 350M864 450.7L1749 409.7' />
        <path d='M870 458.7L1749 417.7M962 552L1749 515.7' />
        <path d='M572 152L627 208L814 400L962 552M697 152L937 399M1033 152L1100 221L1294 419L1403 532M1711 152L1749 191' />
      </g>
      <g stroke='#808080' strokeWidth='2'>
        <path d='M1397 152L1100 165L793 179.3L927 316L1100 309L1248 302M1248 302L1403 460L1749 444' />
      </g>
      <g stroke='#c8c8c8' strokeWidth='2'>
        <path d='M1115 164L1248 302M1234 286L1749 262.7M1319 375L1749 354.7' />
      </g>
      <g stroke='#821c86' strokeWidth='3'>
        <path d='M1188 239L1749 213M1277 331L1749 309M1363 419L1749 402' />
      </g>
      <g stroke='#80801c' strokeWidth='3'>
        <path d='M846 236.5L1390 211.5M806 359.5L1749 316' />
        <path d='M1388 211.5h4' strokeWidth='4' />
      </g>
      <g stroke='#fff' strokeWidth='2' strokeLinejoin='round'>
        <path d='M1220 152L1100 157L750 173V244L817 241M750 173L883 310V381.5L750 244' />
        <path d='M765 316L883 310.5M765 387L883 381.5M765 316V387L934 561L1749 524M765 316L934 489.7V561M934 489.7L1749 452.5' />
        <path d='M1735 152l14 14' />
      </g>
      <path d='M817 241L1749 198' stroke='#ff86ff' strokeWidth='2.5' />
      <g stroke='#999'>
        <circle cx='1186' cy='421.3' r='253' />
        <circle cx='931.5' cy='421' r='30' />
        <circle cx='1440' cy='421' r='30' />
        <circle cx='1186' cy='168' r='30' />
        <circle cx='1186' cy='675' r='30' />
      </g>
      {bubbles.map(([x, y, label]) => (
        <g key={`${x}${label}`}>
          <path d={BUBBLE} transform={`translate(${x} ${y})`} stroke='#008a00' />
          <text x={x} y={y - 1}>
            {label}
          </text>
        </g>
      ))}
      {dims.map(([x, y, angle, label]) => (
        <text key={label} x={x} y={y} transform={`rotate(${angle} ${x} ${y})`}>
          {label}
        </text>
      ))}
      <g>
        <path d='M511 640V620' stroke='#00f' strokeWidth='4' />
        <path d='M511 610l5 13h-10z' fill='#00f' />
        <path d='M511 640h18' stroke='#f00' strokeWidth='4' />
        <path d='M541 639l-13-5v11z' fill='#e00000' />
        <ellipse cx='505' cy='636' rx='4' ry='6' fill='#0f0' />
        <path d='M508 636h7v8h-7z' fill='#ddd' />
        <text x='511' y='604' style={{ fill: '#00f', fontSize: 16 }}>Z</text>
        <text x='546' y='638' style={{ fill: '#f00', fontSize: 16 }}>X</text>
        <text x='503' y='630' style={{ fill: '#0f0', fontSize: 14 }}>Y</text>
      </g>
    </svg>
  );
}

const Splitter = styled.div`
  display: flex;
  justify-content: center;
  flex: none;
  height: 4px;
  padding-left: 164px;
  background: var(--panel);

  span {
    display: grid;
    place-items: start center;
    width: 100px;
    background: #3c3c3c;
  }

  ${Caret} {
    width: 7px;
  }
`;

/* ---------- rebar editor ---------- */

const Editor = styled.section`
  display: flex;
  flex-direction: column;
  flex: none;
  height: 281px;
  margin-left: 1px;
  background: var(--title);
  border-top: 11px solid var(--bar);
`;

const EditorTitle = styled.h2`
  flex: none;
  height: 23px;
  margin: 0 0 10px;
  padding-left: 7px;
  border: solid var(--line);
  border-width: 1px 0 1px;
  font-size: 12px;
  line-height: 21px;
`;

const EditorFrame = styled.div`
  display: flex;
  flex-direction: column;
  height: 227px;
  margin: 0 1px 0 10px;
  border: 1px solid #303030;
  overflow: hidden;
`;

const EditorTools = styled.div`
  display: flex;
  align-items: center;
  gap: 9px;
  flex: none;
  height: 27px;
  padding-left: 5px;
  border-bottom: 1px solid #303030;
  white-space: nowrap;
`;

const Pager = styled.button`
  width: 9px;
  text-align: left;
`;

const BarTable = styled.table`
  flex: none;
  width: 100%;
  border-collapse: collapse;
  table-layout: fixed;
  font-family: 'Liberation Serif', 'Noto Sans CJK SC', serif;
  font-size: 12px;
  line-height: 14px;
  color: #000;

  th {
    height: 21px;
    padding: 0;
    border-right: 1px solid #4a4a4a;
    background: var(--head);
    font-family: 'Open Sans', 'Noto Sans CJK SC', sans-serif;
    font-weight: 400;
    color: #d4d4d4;
    white-space: nowrap;
  }

  td {
    height: 46px;
    padding: 0 2px 4px;
    border: 1px solid #d0d4d0;
    border-width: 0 1px 1px 0;
    background: var(--cell);
    white-space: nowrap;
  }

  tbody th {
    border-bottom: 1px solid #555;
  }
`;

const ColumnHead = styled.th`
  && {
    background: ${props => (props.$current ? '#484848' : '#646464')};
    color: ${props => (props.$current ? '#fff' : '#d4d4d4')};
    font-weight: ${props => (props.$current ? 700 : 400)};
  }
`;

const LevelCell = styled.td`
  && {
    padding: 2px 0 0 4px;
  }
`;

const ShapeCell = styled.td`
  && {
    position: relative;
    padding: 0;
  }

  text {
    font-size: 13px;
    dominant-baseline: central;
    text-anchor: middle;
  }
`;

const FormulaCell = styled.td`
  ${props =>
    props.$current &&
    css`
      && {
        padding: 0 3px;
        box-shadow: inset 0 0 0 2px #62a4e8;
        font-family: 'Open Sans', sans-serif;
        line-height: 17px;
        white-space: pre-line;
      }
    `}
`;

const DescCell = styled.td`
  && {
    white-space: pre-line;
  }
`;

const columns = [
  ['筋号', 73],
  ['直径(mm)', 56],
  ['级别', 36],
  ['图号', 33],
  ['图形', 215],
  ['计算公式', 167],
  ['公式描述', 61],
  ['长度', 38],
  ['根数', 39],
  ['搭接', 49],
  ['损耗(%)', 61],
  ['单重(kg)', 61],
  ['总重(kg)', 71],
  ['钢筋归类', 74],
  ['搭接形式', 71],
  ['钢筋类型'],
];

const bars = [
  {
    figure: 18,
    hook: '250',
    span: '5704',
    formula: '5704+250',
    desc: '净长+弯\n折-保…',
    rest: ['5954', '4', '0', '0', '5.287', '21.148'],
    marked: true,
  },
  {
    figure: 18,
    hook: '180',
    span: '1404',
    formula: '1000+max(37*d,\n200)+15*d-40',
    desc: '净长+锚固\n长度+…',
    rest: ['1584', '2', '0', '0', '1.407', '2.814'],
    current: true,
  },
  {
    figure: 64,
    hook: '180',
    span: '6620',
    formula: '6700+15*d-40+15*d-40',
    desc: '净长+弯\n折-保…',
    rest: ['6980', '2', '0', '0', '6.198', '12.396'],
  },
  {
    figure: 64,
    hook: '180',
    span: '64820',
    formula: '64900+15*d-40+15*d-40',
    desc: '净长+弯\n折-保…',
    rest: ['65180', '2', '3744', '0', '61.205', '122.41'],
  },
];

function BarShape({ bar }) {
  const closed = bar.figure === 64;
  return (
    <svg width='214' height='45' viewBox='1 0 214 45' role='img' aria-label={`图形 ${bar.figure}`}>
      <path
        d={closed ? 'M41 14V31H190V14' : 'M43 15V32H211'}
        fill='none'
        stroke='#000'
        strokeWidth='2'
      />
      <text x='26' y={closed ? 22 : 24}>
        {bar.hook}
      </text>
      {closed && (
        <text x='204' y='22'>
          {bar.hook}
        </text>
      )}
      <text x={closed ? 115 : 120} y={closed ? 21 : 19} fill='#f00000'>
        {bar.span}
      </text>
    </svg>
  );
}

function RebarEditor() {
  return (
    <Editor>
      <EditorTitle>编辑钢筋</EditorTitle>
      <EditorFrame>
        <EditorTools>
          <Pager aria-label='首条'>|&lt;</Pager>
          <Pager aria-label='上一条'>&lt;</Pager>
          <Pager aria-label='下一条'>&gt;</Pager>
          <Pager aria-label='末条'>&gt;|</Pager>
          <button aria-label='上移'>
            <Icon name='up' />
          </button>
          <button aria-label='下移'>
            <Icon name='down' />
          </button>
          <Tool icon='insert' label='插入' />
          <Tool icon='delDoc' label='删除' />
          <Tool icon='scale' label='缩尺配筋' />
          <Tool icon='info' label='钢筋信息' />
          <Tool icon='library' label='钢筋图库' />
          <Tool icon='other' label='其他' menu />
          <span>单构件钢筋总重(kg)：376.040</span>
        </EditorTools>
        <BarTable>
          <colgroup>
            <col width='14' />
            {columns.map(([name, width]) => (
              <col key={name} width={width} />
            ))}
          </colgroup>
          <thead>
            <tr>
              <th />
              {columns.map(([name]) => (
                <ColumnHead key={name} $current={name === '计算公式'}>
                  {name}
                </ColumnHead>
              ))}
            </tr>
          </thead>
          <tbody>
            {bars.map((bar, i) => (
              <tr key={bar.span}>
                <ColumnHead $current={bar.current}>{i + 1}</ColumnHead>
                <td>侧面纵筋.{i + 1}</td>
                <td>12</td>
                <LevelCell>
                  <RebarMark color='#000' />
                </LevelCell>
                <td>{bar.figure}</td>
                <ShapeCell>
                  <BarShape bar={bar} />
                  {bar.marked && <RedMark $inset='7px 163px 3px -7px' />}
                </ShapeCell>
                <FormulaCell $current={bar.current}>{bar.formula}</FormulaCell>
                <DescCell>{bar.desc}</DescCell>
                {bar.rest.map((value, n) => (
                  <td key={n}>{value}</td>
                ))}
                <td>直筋</td>
                <td>绑扎</td>
                <td>普通钢筋</td>
              </tr>
            ))}
          </tbody>
        </BarTable>
      </EditorFrame>
    </Editor>
  );
}

/* ---------- status bar ---------- */

const StatusBar = styled.footer`
  display: flex;
  align-items: flex-start;
  flex: none;
  height: 16px;
  padding-top: 4px;
  background: var(--bar);
  line-height: 24px;
  white-space: nowrap;
  overflow: hidden;
`;

const StatusText = styled.span`
  flex: none;
  width: ${props => props.$width}px;

  &:first-child {
    text-indent: -4px;
  }
`;

const StatusButtons = styled.div`
  display: flex;
  gap: 4px;
`;

const StatusButton = styled.button`
  display: flex;
  align-items: center;
  justify-content: center;
  gap: 5px;
  width: ${props => props.$width}px;
  height: 24px;
  border: 1px solid ${props => (props.$on ? '#2f6fb5' : '#2c2c2c')};
  background: ${props => (props.$on ? '#17375c' : 'none')};
`;

function Status() {
  return (
    <StatusBar>
      <StatusText $width={257}>X = 602447 Y = 497507 Z = -5260</StatusText>
      <StatusText $width={83}>层高： 0.35</StatusText>
      <StatusText $width={132}>标高： -5.6 ~ -5.25</StatusText>
      <StatusText $width={103}>1(1)</StatusText>
      <StatusText $width={103}>隐藏：0</StatusText>
      <StatusButtons>
        <StatusButton $width={25} aria-label='正交'>
          <Svg>
            <path d='M3 0v13h12' stroke='#ddd' />
          </Svg>
        </StatusButton>
        <StatusButton $width={36} $on aria-label='捕捉'>
          <Svg>
            <path d='M2 2h12v12H2z' stroke={B} />
            <path d='M0 0h5v5H0z' fill='#ffc29a' stroke={O} />
          </Svg>
          <Caret />
        </StatusButton>
        <StatusButton $width={25} aria-label='交点'>
          <Svg>
            <path d='M1 0l7 8 7-8M8 8v8' stroke='#888' />
          </Svg>
        </StatusButton>
        <StatusButton $width={36} aria-label='垂点'>
          <Svg>
            <path d='M14 1L7 10l-4-2' stroke='#ddd' />
          </Svg>
          <Caret />
        </StatusButton>
        <StatusButton $width={36} aria-label='中点'>
          <Svg>
            <path d='M8 1v14M3 7h10' stroke='#ddd' />
          </Svg>
          <Caret />
        </StatusButton>
        <StatusButton $width={73} $on>
          跨图层选择
        </StatusButton>
        <StatusButton $width={61}>折线选择</StatusButton>
      </StatusButtons>
    </StatusBar>
  );
}

/* ---------- app ---------- */

const menus = ['开始', '工程设置', '建模', '视图', '工具', '工程量', '云应用'];
const combos = [
  ['楼层', '基础层'],
  ['类别', '基础'],
  ['构件类型', '筏板基础'],
  ['构件', 'FB-1'],
  ['分层', '分层1'],
];

export default function App() {
  return (
    <Shell>
      <GlobalStyle />
      <TabBar>
        <Logo>
          <svg width='37' height='20' aria-hidden='true'>
            <rect x='-3' y='-14' width='32' height='27' rx='6' fill='#d7effc' />
            <path d='M0 8q14 6 29 0v1q-2 4-6 4H4q-4 0-4-3z' fill='#a5d8f7' />
            <rect x='11' y='-4' width='6' height='12' rx='3' fill='#1489df' />
            <path d='M33 12v4h-4z' fill='#aaa' />
          </svg>
        </Logo>
        <TabList>
          {menus.map(menu => (
            <MenuTab key={menu} $active={menu === '建模'}>
              {menu}
            </MenuTab>
          ))}
        </TabList>
        <HelpSearch>
          <SearchInput placeholder='答疑解惑，搜这里' aria-label='答疑解惑，搜这里' />
          <Icon name='search' size={13} />
        </HelpSearch>
      </TabBar>
      <Ribbon />
      <ComboBar>
        {combos.map(([label, value], i) => (
          <ComboBox key={label} $first={i === 0}>
            <select aria-label={label}>
              <option>{value}</option>
            </select>
            <Caret />
          </ComboBox>
        ))}
      </ComboBar>
      <Workspace>
        <Navigator />
        <MiddleColumn>
          <UnitPanel />
          <PropertyPanel />
        </MiddleColumn>
        <MainColumn>
          <SideHandle />
          <Viewport>
            <Model />
            <FloatPanel>
              <h2>钢筋显示控制面板</h2>
              <CheckGroup>
                <CheckRow>
                  <input type='checkbox' />
                  U形构造封边钢筋
                </CheckRow>
                <CheckRow>
                  <input type='checkbox' defaultChecked />
                  显示其它图元
                </CheckRow>
                <CheckRow>
                  <input type='checkbox' defaultChecked />
                  显示详细公式
                </CheckRow>
              </CheckGroup>
            </FloatPanel>
          </Viewport>
          <Splitter>
            <span>
              <Caret />
            </span>
          </Splitter>
          <RebarEditor />
        </MainColumn>
      </Workspace>
      <Status />
    </Shell>
  );
}
